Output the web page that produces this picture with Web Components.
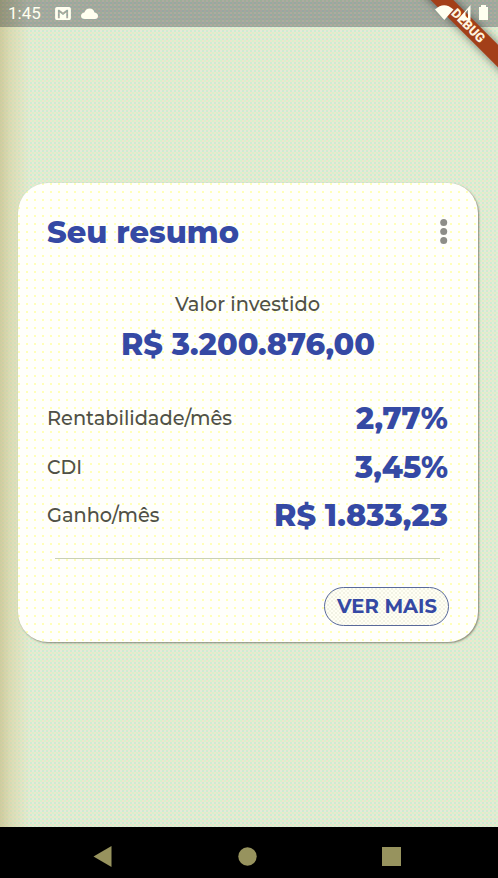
<!DOCTYPE html>
<html lang="pt-BR"><head><meta charset="utf-8"><title>Seu resumo</title>
<style>
html,body{margin:0;height:100%;overflow:hidden}
body{font-family:Montserrat,Inter,"Liberation Sans",sans-serif}
</style></head><body>
<phone-screen>
  <status-bar slot="top">1:45</status-bar>
  <debug-banner slot="badge">DEBUG</debug-banner>
  <summary-card>
    <fit-text slot="title" w="192" h="37" base="29.5" size="30" weight="800">Seu resumo</fit-text>
    <fit-text slot="label" w="145" h="24" base="17.5" size="20" weight="500">Valor investido</fit-text>
    <fit-text slot="amount" w="254" h="37" base="29.5" size="30.5" weight="800">R$ 3.200.876,00</fit-text>
    <info-row>
      <fit-text w="185" h="24" base="18.5" size="20" weight="500">Rentabilidade/mês</fit-text>
      <fit-text slot="value" w="92" h="34" base="28" size="30" weight="800">2,77%</fit-text>
    </info-row>
    <info-row>
      <fit-text w="35" h="24" base="18.5" size="20" weight="500">CDI</fit-text>
      <fit-text slot="value" w="93" h="34" base="28" size="30" weight="800">3,45%</fit-text>
    </info-row>
    <info-row>
      <fit-text w="112.500" h="24" base="18.5" size="20" weight="500">Ganho/mês</fit-text>
      <fit-text slot="value" w="174" h="34" base="28" size="30" weight="800">R$ 1.833,23</fit-text>
    </info-row>
    <pill-button slot="action"><fit-text w="100" h="24" base="18.500" size="19" weight="700">VER MAIS</fit-text></pill-button>
  </summary-card>
  <nav-bar slot="bottom"></nav-bar>
</phone-screen>
<script>
const define=(name,html,init)=>customElements.define(name,class extends HTMLElement{
  connectedCallback(){
    if(this.shadowRoot)return;
    this.attachShadow({mode:'open'}).innerHTML=html;
    if(init)init.call(this,this.shadowRoot);
  }
});

define('phone-screen',`<style>
:host{display:flex;flex-direction:column;position:relative;width:498px;height:878px;overflow:hidden;
 background:
 linear-gradient(90deg,rgba(195,182,125,.6),rgba(212,205,155,.55) 10px,rgba(220,215,170,.4) 20px,rgba(220,230,190,0) 30px),
 conic-gradient(#eee5cc 25%,#cdecd2 0 50%,#e8e8d8 0 75%,#d6f2cc 0) 0 0/4px 4px}
main{flex:1;padding:156px 20px 0 18px}
</style><slot name="top"></slot><main><slot></slot></main><slot name="bottom"></slot><slot name="badge"></slot>`);

define('status-bar',`<style>
:host{display:flex;align-items:center;height:27px;box-sizing:border-box;padding:0 8px 0 8px;color:#fffff0;
 font:17px/29px Roboto,sans-serif;
 background:linear-gradient(90deg,rgba(125,115,65,.4),transparent 28px),conic-gradient(#b0a9a0 25%,#95aaa0 0 50%,#a8a39e 0 75%,#9cae98 0) 0 0/4px 4px}
svg{display:block;fill:#fffff0}
.mail{margin-left:14px}.cloud{margin-left:10px}
</style><slot></slot>
<svg class="mail" width="16" height="13" viewBox="0 0 17 14"><path fill-rule="evenodd" d="M2 0h13q2 0 2 2v10q0 2-2 2H2q-2 0-2-2V2q0-2 2-2zM3 3v9h2V6l3.500 2.700L12 6v6h2V3h-1.500L8.500 6 4.500 3z"/></svg>
<svg class="cloud" width="17" height="12" viewBox="0 0 17 12"><path d="M4 11Q0 11 0 7.800 0 5 3.300 4.400 5 0.500 8.500 .5 12.500.5 13.500 4.500 17 5 17 8q0 3-3 3z"/></svg>`);

define('debug-banner',`<style>
:host{position:absolute;inset:0 0 auto auto;width:98px;height:80px;overflow:hidden;pointer-events:none}
.band{position:absolute;left:-2px;top:18px;width:140px;height:16px;background:#a33f18;box-shadow:0 0 8px rgba(0,0,0,.5);
 transform:rotate(45deg);color:#fff4df;font:900 13px/16px Roboto,sans-serif;text-align:center}
svg{position:absolute;left:0;top:0;fill:#fffff0}
</style><div class="band"><slot></slot></div>
<svg width="98" height="40" viewBox="0 0 98 40"><path d="M35 9.500Q44 1 53.500 9.500L44.300 20z"/><path fill-rule="evenodd" d="M57 20.500L70.500 5v15.500zM65.500 12.500V18h2.500v-8.300z"/><path d="M79 7h2V5h5v2h2v13h-9z"/></svg>`);

define('summary-card',`<style>
:host{display:block;box-sizing:border-box;height:459px;padding:30px 30px 0 29px;border-radius:30px;
 background:radial-gradient(circle at 1px 1px,#ffffb8 .8px,transparent 1px) 0 0/8px 8px,#fffffb;
 box-shadow:1px 1px 2px rgba(90,85,70,.65);color:#505147;--strong:#3549a4}
header{display:flex;justify-content:space-between;height:37px;color:var(--strong)}
header svg{margin:5px 0 0 0;fill:#8d8d88}
.total{display:flex;flex-direction:column;align-items:center;margin-top:43px;height:62px}
.amount{display:block;margin-top:8px;color:var(--strong)}
.rows{display:flex;flex-direction:column;margin-top:46px;height:147px}
hr{margin:10px 8px 0 8px;border:0;height:1px;background:#c9d0b3}
footer{display:flex;justify-content:flex-end;margin:28px -1px 0 0}
</style>
<header><slot name="title"></slot><svg width="8" height="27" viewBox="0 0 8 27"><circle cx="3.700" cy="4.500" r="3.500"/><circle cx="3.700" cy="13.500" r="3.500"/><circle cx="3.700" cy="22.500" r="3.500"/></svg></header>
<div class="total"><slot name="label"></slot><div class="amount"><slot name="amount"></slot></div></div>
<div class="rows"><slot></slot></div><hr><footer><slot name="action"></slot></footer>`);

define('info-row',`<style>:host{display:flex;justify-content:space-between;height:48.500px}
.l{padding-top:5px}.v{color:var(--strong)}</style><div class="l"><slot></slot></div><div class="v"><slot name="value"></slot></div>`);

define('pill-button',`<style>:host{display:flex;justify-content:center;box-sizing:border-box;width:125px;height:39px;padding-top:6px;
border:1px solid #58699a;border-radius:20px;color:#3549a4;
background:conic-gradient(#f2f2e4 25%,#fffff4 0 50%,#f6f6e8 0 75%,#fffff4 0) 0 0/4px 4px}</style><slot></slot>`);

/* A line of text set to an exact advance width on a given baseline. */
define('fit-text',`<style>:host{display:block}svg{display:block;overflow:visible}text{fill:currentColor;font-family:inherit}</style><svg><text x="0"></text></svg>`,
function(root){
  const a=n=>this.getAttribute(n),svg=root.querySelector('svg'),t=root.querySelector('text');
  svg.setAttribute('width',a('w'));svg.setAttribute('height',a('h'));
  t.setAttribute('y',a('base'));t.setAttribute('font-size',a('size'));t.setAttribute('font-weight',a('weight')||'400');
  t.setAttribute('textLength',a('w'));t.setAttribute('lengthAdjust','spacingAndGlyphs');
  t.textContent=this.textContent;
});

define('nav-bar',`<style>:host{display:flex;justify-content:space-between;align-items:center;box-sizing:border-box;height:51px;padding:7px 97px 0 93px;background:#000}
svg{fill:#97935e}</style>
<svg width="19" height="21" viewBox="0 0 19 21"><path d="M0.500 10.500L18.500 0v21z"/></svg>
<svg width="19" height="19" viewBox="0 0 19 19"><circle cx="9.500" cy="9.500" r="9.200"/></svg>
<svg width="19" height="19" viewBox="0 0 19 19"><path d="M0 0h19v19H0z"/></svg>`);
</script>
</body></html>
